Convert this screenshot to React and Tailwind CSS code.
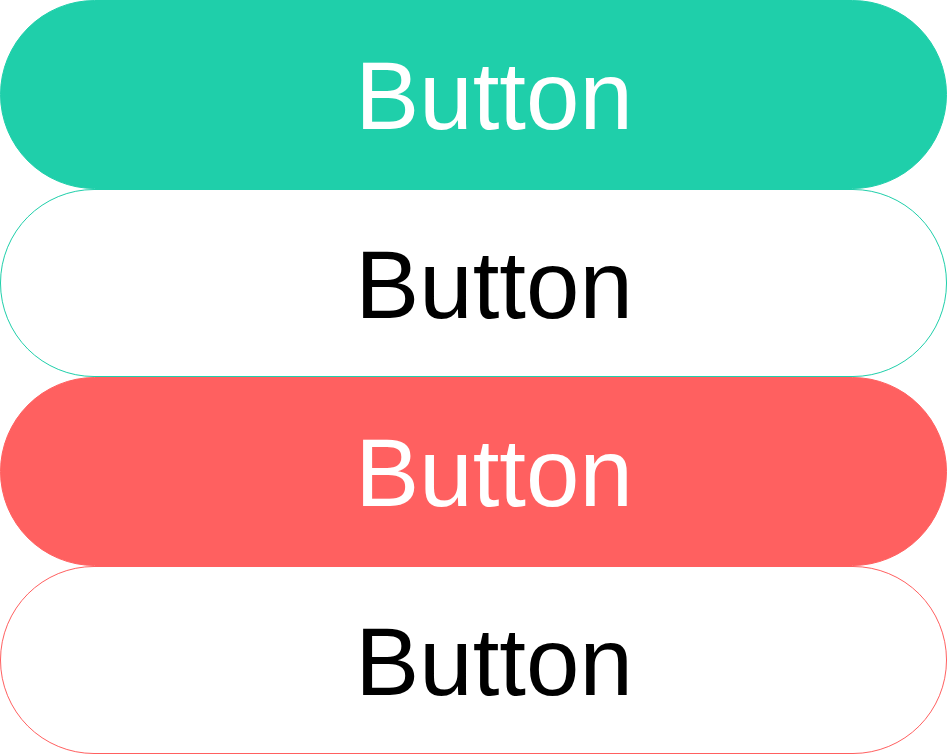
export default function App() {
  const buttons = [
    "bg-[#1fcfaa] text-white border border-[#1fcfaa]",
    "bg-white text-black border border-[#1fcfaa]",
    "bg-[#ff6060] text-white border border-[#ff6060]",
    "bg-white text-black border border-[#ff6060]",
  ];

  return (
    <div className="w-[947px] h-[754px] flex flex-col bg-white font-['Liberation_Sans',Arial,sans-serif]">
      {buttons.map((cls, i) => (
        <button
          key={i}
          className={`h-[188.5px] w-full rounded-full flex items-center justify-center pl-[41px] pt-[4px] text-[96px] leading-none ${cls}`}
        >
          Button
        </button>
      ))}
    </div>
  );
}
